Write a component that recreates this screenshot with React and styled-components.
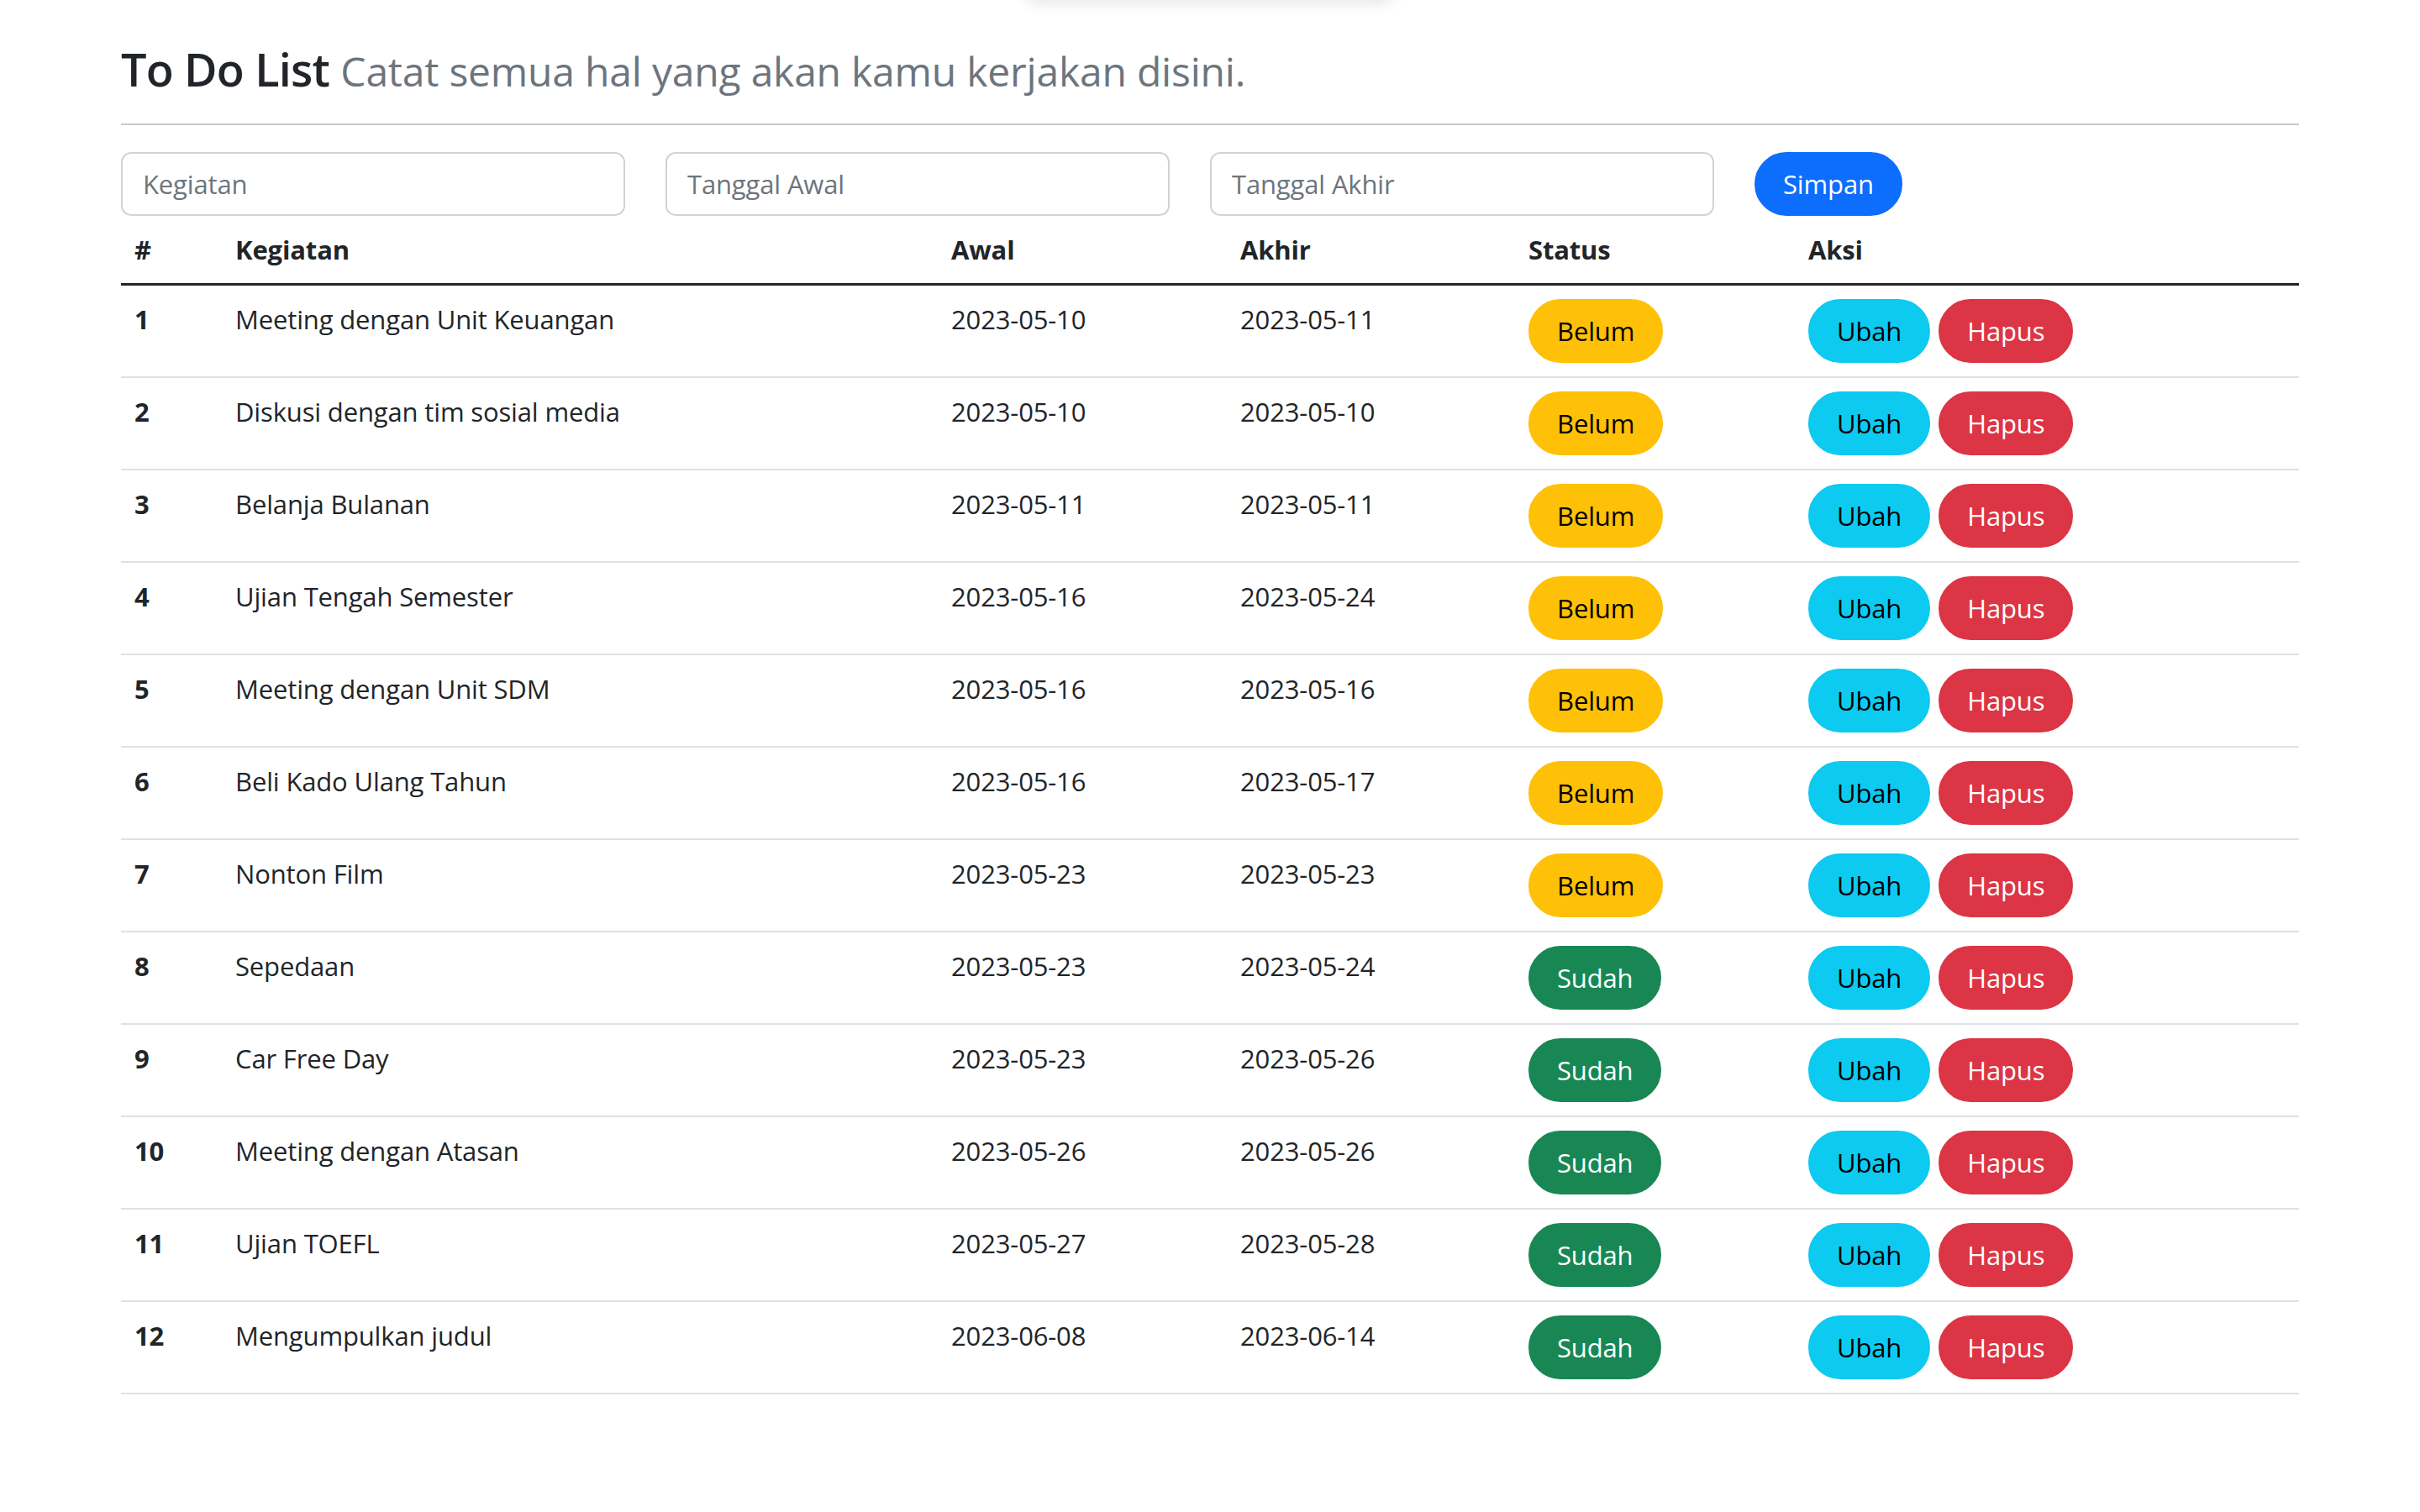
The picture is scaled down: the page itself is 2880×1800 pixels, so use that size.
import React from "react";
import styled, { createGlobalStyle } from "styled-components";

const GlobalStyle = createGlobalStyle`
  body {
    margin: 0;
    background: #fff;
    color: #212529;
    font-family: "Open Sans", "Noto Sans", "Liberation Sans", sans-serif;
    font-size: 31px;
    letter-spacing: -0.15px;
    line-height: 48px;
  }
`;

// faint shadow of something sitting just above the viewport
const TopShadow = styled.div`
  position: fixed;
  top: -50px;
  left: 50%;
  transform: translateX(-50%);
  width: 440px;
  height: 50px;
  border-radius: 16px;
  background: #fff;
  box-shadow: 0 4px 18px rgba(0, 0, 0, 0.1);
`;

const Page = styled.div`
  width: 2592px;
  margin: 0 auto;
  padding-top: 52px;
`;

const Title = styled.h3`
  margin: 0 0 16px;
  font-size: 54px;
  font-weight: 600;
  letter-spacing: -0.8px;
  line-height: 61px;

  small {
    font-size: 48px;
    font-weight: 400;
    letter-spacing: -0.2px;
    color: #6c757d;
  }
`;

const Divider = styled.hr`
  margin: 32px 0;
  border: 0;
  border-top: 2px solid #c8c9ca;
`;

const FormRow = styled.form`
  display: grid;
  grid-template-columns: repeat(4, 600px);
  column-gap: 48px;
  align-items: start;
`;

const Field = styled.input`
  box-sizing: border-box;
  width: 100%;
  height: 76px;
  padding: 12px 24px;
  font-family: inherit;
  font-size: 31px;
  letter-spacing: -0.15px;
  line-height: 48px;
  color: #212529;
  background: #fff;
  border: 2px solid #ced4da;
  border-radius: 12px;
  outline: none;

  &::placeholder {
    color: #6c757d;
  }
`;

const variants = {
  primary: { bg: "#0d6efd", fg: "#fff" },
  warning: { bg: "#ffc107", fg: "#000" },
  success: { bg: "#198754", fg: "#fff" },
  info: { bg: "#0dcaf0", fg: "#000" },
  danger: { bg: "#dc3545", fg: "#fff" },
};

const Pill = styled.button`
  display: inline-block;
  box-sizing: border-box;
  height: 76px;
  padding: 12px 32px;
  font-family: inherit;
  font-size: 31px;
  letter-spacing: -0.15px;
  line-height: 48px;
  color: ${({ $variant }) => variants[$variant].fg};
  background: ${({ $variant }) => variants[$variant].bg};
  border: 2px solid ${({ $variant }) => variants[$variant].bg};
  border-radius: 100px;
  cursor: pointer;
  justify-self: start;
`;

const Table = styled.table`
  width: 100%;
  border-collapse: collapse;
  table-layout: fixed;

  th,
  td {
    padding: 16px;
    text-align: left;
    vertical-align: top;
    line-height: 48px;
  }

  thead th {
    font-weight: 700;
    border-bottom: 3px solid #212529;
  }

  tbody td,
  tbody th {
    border-bottom: 2px solid #dee2e6;
  }

  tbody th {
    font-weight: 700;
  }
`;

const Actions = styled.div`
  display: flex;
  gap: 10px;
`;

const todos = [
  ["Meeting dengan Unit Keuangan", "2023-05-10", "2023-05-11", false],
  ["Diskusi dengan tim sosial media", "2023-05-10", "2023-05-10", false],
  ["Belanja Bulanan", "2023-05-11", "2023-05-11", false],
  ["Ujian Tengah Semester", "2023-05-16", "2023-05-24", false],
  ["Meeting dengan Unit SDM", "2023-05-16", "2023-05-16", false],
  ["Beli Kado Ulang Tahun", "2023-05-16", "2023-05-17", false],
  ["Nonton Film", "2023-05-23", "2023-05-23", false],
  ["Sepedaan", "2023-05-23", "2023-05-24", true],
  ["Car Free Day", "2023-05-23", "2023-05-26", true],
  ["Meeting dengan Atasan", "2023-05-26", "2023-05-26", true],
  ["Ujian TOEFL", "2023-05-27", "2023-05-28", true],
  ["Mengumpulkan judul", "2023-06-08", "2023-06-14", true],
];

export default function App() {
  return (
    <>
      <GlobalStyle />
      <TopShadow />
      <Page>
        <Title>
          To Do List <small>Catat semua hal yang akan kamu kerjakan disini.</small>
        </Title>
        <Divider />

        <FormRow onSubmit={(e) => e.preventDefault()}>
          <Field type="text" placeholder="Kegiatan" />
          <Field type="text" placeholder="Tanggal Awal" />
          <Field type="text" placeholder="Tanggal Akhir" />
          <Pill type="submit" $variant="primary">
            Simpan
          </Pill>
        </FormRow>

        <Table>
          <colgroup>
            <col style={{ width: 120 }} />
            <col style={{ width: 852 }} />
            <col style={{ width: 344 }} />
            <col style={{ width: 343 }} />
            <col style={{ width: 333 }} />
            <col />
          </colgroup>
          <thead>
            <tr>
              <th>#</th>
              <th>Kegiatan</th>
              <th>Awal</th>
              <th>Akhir</th>
              <th>Status</th>
              <th>Aksi</th>
            </tr>
          </thead>
          <tbody>
            {todos.map(([kegiatan, awal, akhir, done], index) => (
              <tr key={`todo-${index}`}>
                <th>{index + 1}</th>
                <td>{kegiatan}</td>
                <td>{awal}</td>
                <td>{akhir}</td>
                <td>
                  <Pill $variant={done ? "success" : "warning"}>
                    {done ? "Sudah" : "Belum"}
                  </Pill>
                </td>
                <td>
                  <Actions>
                    <Pill $variant="info">Ubah</Pill>
                    <Pill $variant="danger">Hapus</Pill>
                  </Actions>
                </td>
              </tr>
            ))}
          </tbody>
        </Table>
      </Page>
    </>
  );
}
